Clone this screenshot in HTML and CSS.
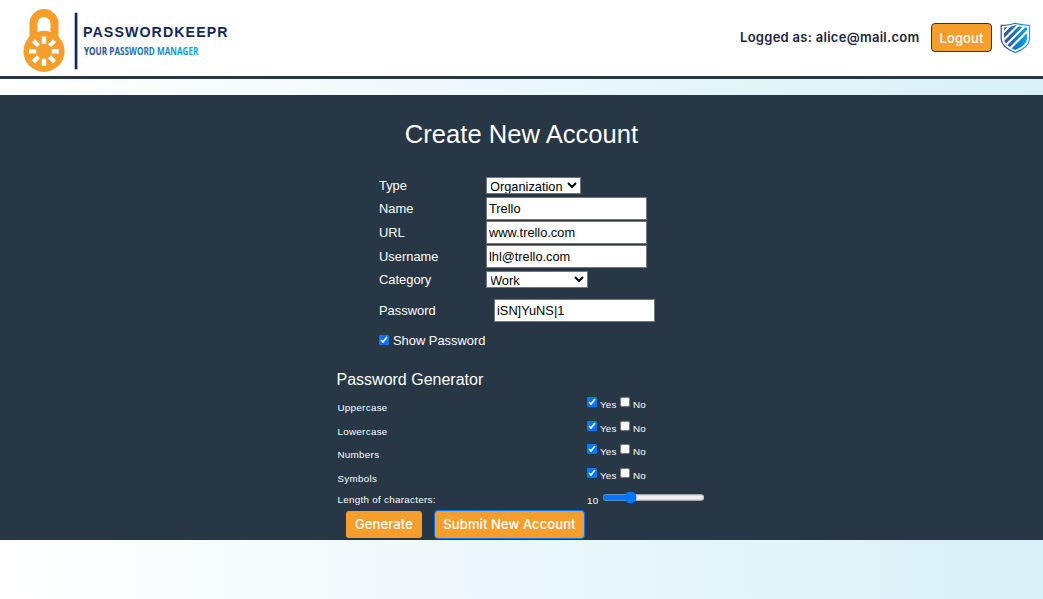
FILE: index.html
```html
<!DOCTYPE html>
<html lang="en">
<head>
<meta charset="utf-8">
<title>PasswordKeepr</title>
<link rel="stylesheet" href="styles.css">
</head>
<body>
<header class="topbar">
  <svg class="logo" width="230" height="76" viewBox="0 0 230 76">
    <defs>
      <linearGradient id="tag" gradientUnits="userSpaceOnUse" x1="84" y1="0" x2="199" y2="0"><stop offset="0" stop-color="#283f91"/><stop offset="1" stop-color="#05a9e6"/></linearGradient>
    </defs>
    <path d="M33.500 38V23.500a10.500 10.500 0 0 1 21 0V38" fill="none" stroke="#f59e2c" stroke-width="8"/>
    <circle cx="44" cy="51.300" r="20.600" fill="#f59e2c"/>
    <g stroke="#fff" stroke-width="4.400" stroke-linecap="butt">
      <path d="M44 36.500v7.200M44 58.800V66M29 51.300h7.200M51.800 51.300H59M33.400 40.700l5.100 5.100M49.500 56.800l5.100 5.100M54.600 40.700l-5.100 5.100M38.500 56.800l-5.100 5.100"/>
    </g>
    <rect x="74.700" y="12.700" width="2.700" height="56.600" fill="#14295a"/>
    <text class="brand" x="83" y="37" textLength="144.500">PASSWORDKEEPR</text>
    <text class="tagline" x="84" y="55" textLength="114.500" lengthAdjust="spacingAndGlyphs" fill="url(#tag)">YOUR PASSWORD MANAGER</text>
  </svg>
  <div class="session">
    <span class="user">Logged as: alice@mail.com</span>
    <button class="btn logout">Logout</button>
    <svg class="shield" width="32" height="32" viewBox="0 0 32 32">
      <defs>
        <linearGradient id="sh" gradientUnits="userSpaceOnUse" x1="3" y1="0" x2="29" y2="0"><stop offset="0" stop-color="#3b4a9c"/><stop offset=".5" stop-color="#1478c4"/><stop offset="1" stop-color="#08aeea"/></linearGradient>
        <clipPath id="inner"><path d="M4 5.500Q11.500 5 15.300 3Q19 5 27 5.500V17Q26.500 23.500 15.300 28Q4.500 23.500 4 17Z"/></clipPath>
      </defs>
      <path d="M1.200 3.400Q10 3 15.300 1.200Q20.500 3 29.500 3.400V17Q29 25.500 15.300 30.500Q1.600 25.500 1.200 17Z" fill="none" stroke="url(#sh)" stroke-width="1.200"/>
      <g clip-path="url(#inner)"><rect width="32" height="32" fill="url(#sh)"/>
      <path d="M0 14L16 -2M0 21.500L23 -1.500M0 29L31 -2M5 31.500L35 1.500" stroke="#fff" stroke-width="2.200"/></g>
    </svg>
  </div>
</header>
<main class="panel">
  <h1 class="title">Create New Account</h1>
  <form class="account">
    <label class="raised">Type</label><select class="type raised"><option>Organization</option></select>
    <label>Name</label><input type="text" value="Trello">
    <label>URL</label><input type="text" value="www.trello.com">
    <label>Username</label><input type="text" value="lhl@trello.com">
    <label>Category</label><select class="category"><option>Work</option></select>
    <label>Password</label><input class="password" type="text" value="iSN]YuNS|1">
    <label class="show"><input type="checkbox" checked><span>Show Password</span></label>
  </form>
  <section class="generator">
    <h2 class="subtitle">Password Generator</h2>
    <div class="option"><span>Uppercase</span><div class="choice"><input type="checkbox" checked><span class="yes">Yes</span><input type="checkbox"><span>No</span></div></div>
    <div class="option"><span>Lowercase</span><div class="choice"><input type="checkbox" checked><span class="yes">Yes</span><input type="checkbox"><span>No</span></div></div>
    <div class="option"><span>Numbers</span><div class="choice"><input type="checkbox" checked><span class="yes">Yes</span><input type="checkbox"><span>No</span></div></div>
    <div class="option"><span>Symbols</span><div class="choice"><input type="checkbox" checked><span class="yes">Yes</span><input type="checkbox"><span>No</span></div></div>
    <div class="option length"><span>Length of characters:</span><div class="choice"><span class="count">10</span><input class="slider" type="range" min="0" max="100" value="25"></div></div>
    <div class="actions"><button class="btn generate">Generate</button><button class="btn submit">Submit New Account</button></div>
  </section>
</main>
</body>
</html>
```
FILE: styles.css
```css
* { box-sizing: border-box; }
html { height: 100%; }
body {
  margin: 0;
  height: 599px;
  overflow: hidden;
  font-family: "Liberation Sans", Arial, sans-serif;
  background: linear-gradient(to right, #fff, #d8f0f7);
}
.topbar {
  display: flex;
  justify-content: space-between;
  height: 79px;
  background: #fff;
  border-bottom: 3px solid #273746;
}
.brand { font: bold 14.200px "Liberation Sans", Arial, sans-serif; fill: #14295a; }
.tagline { font: bold 10px "Open Sans", sans-serif; }
.session {
  display: flex;
  align-items: center;
  height: 75px;
  padding-right: 12px;
}
.user {
  width: 180px;
  margin-right: 11px;
  padding-bottom: 2px;
  font: 600 13px/20px Inter, sans-serif;
  letter-spacing: .28px;
  color: #1c2642;
  white-space: nowrap;
}
.btn {
  padding: 0;
  border: 0;
  border-radius: 3px;
  background: #f59e2c;
  color: #fff;
  font: 500 13px/20px Inter, sans-serif;
  letter-spacing: .1px;
  white-space: nowrap;
}
.logout {
  width: 61px;
  height: 29px;
  margin-right: 8px;
  border: 1px solid #273746;
  border-radius: 4px;
}
.shield { margin-right: -1px; }
.panel {
  height: 445px;
  margin-top: 16px;
  padding-top: 22px;
  background: #273746;
  color: #fff;
}
.title {
  margin: 0;
  height: 60px;
  font-size: 25.600px;
  font-weight: 400;
  line-height: 34px;
  text-align: center;
}
.account {
  display: grid;
  grid-template-columns: 107px 169px;
  grid-template-rows: 19px 22.500px 22.500px 22.500px 20.500px 38px 19px;
  row-gap: 1.500px;
  width: 276px;
  height: 192px;
  margin-left: 379px;
  font-size: 12.900px;
  align-content: start;
  align-items: center;
}
.account label { line-height: 17px; }
.account input[type=text], .account select {
  width: 161px;
  height: 23px;
  padding: 0 2px;
  border: 1px solid #767676;
  border-radius: 0;
  background: #fff;
  color: #000;
  font: 12.800px "Liberation Sans", Arial, sans-serif;
}
.account select { height: 17px; padding: 0; text-indent: -1px; }
.account .raised { align-self: start; }
.account .type { width: 95px; }
.account .category { width: 102px; }
.account .password { margin-left: 8px; }
.account .show {
  grid-column: 1 / 3;
  display: flex;
  align-items: center;
  gap: 4px;
}
input[type=checkbox] { width: 10px; height: 10px; margin: 0; accent-color: #0075ff; }
.show input[type=checkbox] { margin-bottom: 2px; }
.generator { width: 368px; margin-left: 336.500px; }
.subtitle { margin: 0; height: 27px; font-size: 16px; font-weight: 400; line-height: 21px; }
.option {
  display: grid;
  grid-template-columns: 250px 118px;
  height: 23.600px;
  padding-top: 3px;
  font-size: 9.800px;
  letter-spacing: .2px;
  line-height: 14px;
}
.option > span { padding-left: 1px; padding-top: 2px; letter-spacing: .3px; }
.choice { display: flex; align-items: flex-start; height: 14px; margin: -2px 0 0 .5px; }
.choice > span { margin-left: 3px; padding-top: 1px; }
.choice .yes { width: 17px; margin-right: 3px; }
.choice .count { width: 11px; margin: 0 2px 0 0; padding-top: 5px; }
.length { height: 19.600px; padding-top: 1px; }
.slider { zoom: .8; width: 129px; margin: 2px 2px 0; }
.actions { display: flex; align-items: center; gap: 12px; height: 29px; padding-left: 9.500px; }
.generate { width: 76px; height: 27px; }
.submit { width: 151px; height: 29px; border: 1px solid #0075ff; border-radius: 4px; }
```
